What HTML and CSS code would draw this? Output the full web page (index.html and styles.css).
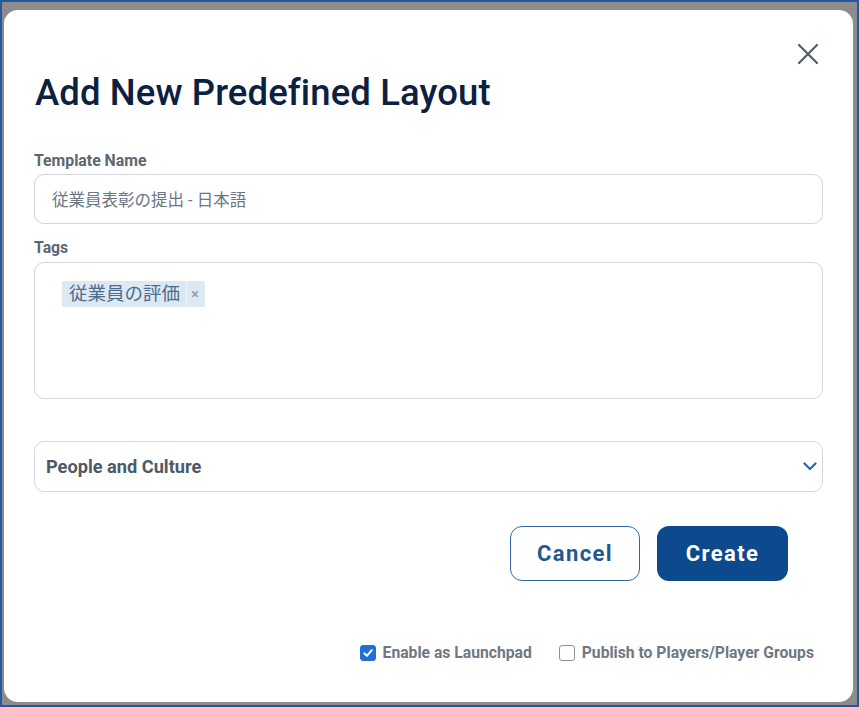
FILE: index.html
```html
<!DOCTYPE html>
<html lang="en">
<head>
<meta charset="utf-8">
<link rel="stylesheet" href="styles.css">
</head>
<body>
<div class="frame">
  <div class="dialog">
    <div class="header">
      <button class="close" aria-label="Close">
        <svg width="22" height="22" viewBox="0 0 22 22"><path d="M2 2 L20 20 M20 2 L2 20" stroke="#4f5d6b" stroke-width="2.2" fill="none" stroke-linecap="round"/></svg>
      </button>
      <h1 class="title">Add New Predefined Layout</h1>
    </div>

    <div class="field">
      <label class="label">Template Name</label>
      <div class="input">従業員表彰の提出 - 日本語</div>
    </div>

    <div class="field">
      <label class="label">Tags</label>
      <div class="tags">
        <span class="chip"><span class="chip-text">従業員の評価</span><span class="chip-x">×</span></span>
      </div>
    </div>

    <div class="select">
      <span class="select-text">People and Culture</span>
      <svg width="14" height="9" viewBox="0 0 14 9"><path d="M1.5 1.5 L7 7 L12.5 1.5" stroke="#2a64a6" stroke-width="2.2" fill="none" stroke-linecap="round" stroke-linejoin="round"/></svg>
    </div>

    <div class="actions">
      <button class="btn btn-outline">Cancel</button>
      <button class="btn btn-primary">Create</button>
    </div>

    <div class="checks">
      <label class="check">
        <span class="box box-on"><svg width="12" height="12" viewBox="0 0 12 12"><path d="M2.3 6.3 L4.9 8.8 L9.8 3.2" stroke="#fff" stroke-width="2" fill="none" stroke-linecap="round" stroke-linejoin="round"/></svg></span>
        <span class="check-text">Enable as Launchpad</span>
      </label>
      <label class="check">
        <span class="box"></span>
        <span class="check-text">Publish to Players/Player Groups</span>
      </label>
    </div>
  </div>
</div>
</body>
</html>
```

FILE: styles.css
```css
html, body {
  margin: 0;
  padding: 0;
}
body {
  width: 859px;
  height: 707px;
  overflow: hidden;
  font-family: Roboto, "Noto Sans CJK JP", sans-serif;
}
.frame {
  box-sizing: border-box;
  width: 859px;
  height: 707px;
  border: 2px solid #2459a0;
  background: #8c8c8c;
  padding: 8px 4px 3px 2px;
  display: flex;
}
.dialog {
  flex: 1;
  background: #fff;
  border-radius: 14px;
  padding: 0 30px 0 30px;
  display: flex;
  flex-direction: column;
}
.header {
  display: flex;
  flex-direction: column;
}
.close {
  align-self: flex-end;
  margin: 33px 4px 0 0;
  background: none;
  border: 0;
  padding: 0;
  width: 22px;
  height: 22px;
  cursor: pointer;
}
.title {
  margin: 6px 0 0 1px;
  font-size: 36.5px;
  font-weight: 500;
  color: #0c2140;
  line-height: 44px;
  letter-spacing: 0.1px;
}
.field {
  display: flex;
  flex-direction: column;
}
.label {
  font-size: 15.8px;
  font-weight: 700;
  color: #5d6670;
  margin-top: 36px;
  line-height: 19px;
}
.field + .field .label {
  margin-top: 14px;
}
.input {
  margin-top: 4px;
  height: 50px;
  box-sizing: border-box;
  border: 1px solid #d3d6da;
  border-radius: 10px;
  padding: 0 17px;
  display: flex;
  align-items: center;
  font-size: 16.5px;
  color: #6b7683;
}
.tags {
  margin-top: 5px;
  height: 137px;
  box-sizing: border-box;
  border: 1px solid #d3d6da;
  border-radius: 10px;
  padding: 18px 27px;
}
.chip {
  display: inline-flex;
  align-items: center;
  background: #dce8f2;
  height: 26px;
  padding: 0 6px 0 7px;
  border-radius: 2px;
}
.chip-text {
  font-size: 18.5px;
  color: #4a6d8f;
  padding-right: 6px;
  border-right: 1px solid #eef3f8;
  line-height: 26px;
}
.chip-x {
  font-size: 15px;
  color: #8a9aa8;
  padding-left: 4px;
}
.select {
  margin-top: 42px;
  height: 51px;
  box-sizing: border-box;
  border: 1px solid #d3d6da;
  border-radius: 10px;
  padding: 0 5px 0 11px;
  display: flex;
  align-items: center;
  justify-content: space-between;
}
.select-text {
  font-size: 18.2px;
  font-weight: 700;
  color: #4d5965;
}
.actions {
  margin-top: 34px;
  display: flex;
  justify-content: flex-end;
  gap: 17px;
  padding-right: 35px;
}
.btn {
  height: 55px;
  box-sizing: border-box;
  border-radius: 12px;
  font-family: Roboto, sans-serif;
  font-size: 22px;
  font-weight: 700;
  letter-spacing: 1.4px;
  cursor: pointer;
}
.btn-outline {
  width: 130px;
  background: #fff;
  border: 1.5px solid #3467a5;
  color: #245894;
}
.btn-primary {
  width: 131px;
  background: #0c4a8d;
  border: 0;
  color: #fff;
}
.checks {
  margin-top: 62px;
  display: flex;
  justify-content: flex-end;
  gap: 27px;
  padding-right: 9px;
}
.check {
  display: flex;
  align-items: center;
  gap: 7px;
}
.box {
  width: 16px;
  height: 16px;
  box-sizing: border-box;
  border: 1.5px solid #8c9298;
  border-radius: 3px;
  display: flex;
  align-items: center;
  justify-content: center;
}
.box-on {
  background: #1f6fd6;
  border-color: #1f6fd6;
}
.check-text {
  font-size: 15.7px;
  font-weight: 700;
  color: #6f7882;
  line-height: 19px;
}
```
